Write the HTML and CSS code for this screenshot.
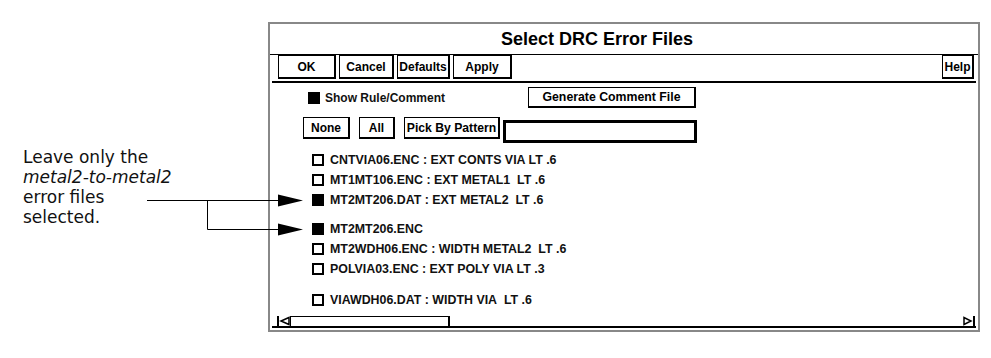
FILE: index.html
```html
<!DOCTYPE html>
<html lang="en">
<head>
  <meta charset="UTF-8">
  <title>Select DRC Error Files</title>
  <link rel="stylesheet" href="styles.css">
</head>
<body>
  <div class="page">

    <!-- Annotation -->
    <div class="note">
      Leave only the<br>
      <em>metal2-to-metal2</em><br>
      error files<br>
      selected.
    </div>

    <!-- Dialog -->
    <div class="dialog">
      <div class="title">Select DRC Error Files</div>

      <div class="toolbar">
        <button class="tbtn ok">OK</button>
        <button class="tbtn cancel">Cancel</button>
        <button class="tbtn defaults">Defaults</button>
        <button class="tbtn apply">Apply</button>
        <button class="tbtn help">Help</button>
      </div>

      <div class="content">
        <div class="row1">
          <label class="opt"><span class="box on"></span>Show Rule/Comment</label>
          <button class="btn gen">Generate Comment File</button>
        </div>

        <div class="row2">
          <button class="btn none">None</button>
          <button class="btn all">All</button>
          <button class="btn pick">Pick By Pattern</button>
          <input class="pattern" type="text">
        </div>

        <ul class="files">
          <li><span class="box"></span>CNTVIA06.ENC : EXT CONTS VIA LT .6</li>
          <li><span class="box"></span>MT1MT106.ENC : EXT METAL1&nbsp; LT .6</li>
          <li><span class="box on"></span>MT2MT206.DAT : EXT METAL2&nbsp; LT .6</li>
          <li class="sep"><span class="box on"></span>MT2MT206.ENC</li>
          <li><span class="box"></span>MT2WDH06.ENC : WIDTH METAL2&nbsp; LT .6</li>
          <li><span class="box"></span>POLVIA03.ENC : EXT POLY VIA LT .3</li>
          <li class="sep2"><span class="box"></span>VIAWDH06.DAT : WIDTH VIA&nbsp; LT .6</li>
        </ul>
      </div>

      <div class="scroll">
        <svg class="arr" width="13" height="10" viewBox="0 0 13 10">
          <path d="M1 0V10" stroke="#000" stroke-width="2"/>
          <path d="M12 1.5V8.5L4 5Z" fill="none" stroke="#000" stroke-width="1.5"/>
        </svg>
        <div class="thumb"></div>
        <svg class="arr right" width="12" height="10" viewBox="0 0 12 10">
          <path d="M1 1.5V8.5L8 5Z" fill="none" stroke="#000" stroke-width="1.5"/>
          <path d="M11 0V10" stroke="#000" stroke-width="2"/>
        </svg>
      </div>
    </div>

    <!-- Leader lines -->
    <svg class="leader" width="991" height="358" viewBox="0 0 991 358">
      <path d="M147 200.5H280M207.5 200.5V229.5H280" fill="none" stroke="#000" stroke-width="1"/>
      <polygon points="278,194.5 303,200.5 278,206.5" fill="#000"/>
      <polygon points="278,223.5 303,229.5 278,235.5" fill="#000"/>
    </svg>

  </div>
</body>
</html>
```

FILE: styles.css
```css
* { margin: 0; padding: 0; box-sizing: border-box; }
body { background: #fff; color: #000; font-family: "Liberation Sans", Arial, sans-serif; }

.page {
  position: relative;
  width: 991px;
  height: 358px;
  display: flex;
  align-items: flex-start;
}

/* Annotation */
.note {
  width: 268px;
  padding: 147px 0 0 23px;
  font-family: "DejaVu Sans", sans-serif;
  font-size: 17px;
  line-height: 20px;
  color: #111;
}

.leader {
  position: absolute;
  left: 0;
  top: 0;
  pointer-events: none;
}

/* Dialog */
.dialog {
  margin-top: 22px;
  width: 712px;
  height: 310px;
  border: 2px solid #888;
  display: flex;
  flex-direction: column;
}

.title {
  height: 31px;
  border-bottom: 1px solid #000;
  padding-left: 231px;
  font-size: 18px;
  font-weight: bold;
  line-height: 30px;
}

.toolbar {
  display: flex;
  align-items: flex-start;
  gap: 3px;
  height: 28px;
  margin: 0 2px;
  padding: 0 2px 0 6px;
  border-bottom: 2px solid #000;
}

.tbtn, .btn {
  background: #fff;
  color: #000;
  border: solid #000;
  border-width: 1px 2px 2px 1px;
  font-family: "Liberation Sans", Arial, sans-serif;
  font-weight: bold;
  font-size: 12px;
  white-space: nowrap;
}

.tbtn { height: 24px; }
.ok { width: 58px; }
.cancel { width: 55px; }
.defaults { width: 53px; padding: 0; }
.apply { width: 59px; }
.help { width: 32px; margin-left: auto; padding: 0; }

.content {
  flex: 1;
  padding-top: 4px;
}

.row1 {
  display: flex;
  align-items: center;
  height: 21px;
  padding-left: 38px;
}

.opt {
  width: 220px;
  display: flex;
  align-items: center;
  gap: 5px;
  font-size: 12px;
  font-weight: bold;
  color: #111;
}

.gen {
  width: 168px;
  height: 21px;
  font-size: 12.3px;
}

.row2 {
  display: flex;
  align-items: flex-start;
  height: 26px;
  margin-top: 9px;
  padding-left: 33px;
}

.row2 .btn { height: 22px; padding: 0; }
.none { width: 47px; }
.all { width: 36px; margin-left: 9px; }
.pick { width: 96px; margin-left: 9px; font-size: 12.2px; }

.pattern {
  width: 194px;
  height: 23px;
  margin: 3px 0 0 3px;
  border: 3px solid #000;
  outline: none;
}

.box {
  display: inline-block;
  flex: none;
  width: 12px;
  height: 12px;
  border: 2px solid #000;
  background: #fff;
}

.box.on { background: #000; }

.files {
  list-style: none;
  margin-top: 7px;
  padding-left: 42px;
}

.files li {
  display: flex;
  align-items: center;
  gap: 6px;
  height: 20px;
  font-size: 12.4px;
  font-weight: bold;
  color: #111;
  white-space: nowrap;
}

.files li.sep { margin-top: 9px; }
.files li.sep2 { margin-top: 11px; }

/* Scrollbar */
.scroll {
  display: flex;
  align-items: flex-end;
  height: 13px;
  margin: 0 2px 2px;
  border-bottom: 2px solid #000;
}

.arr { margin-left: 5px; margin-bottom: 0; }
.arr.right { margin-left: auto; margin-right: 1px; }

.thumb {
  width: 160px;
  height: 10px;
  border: solid #000;
  border-width: 1px 2px 0 1px;
}
```
